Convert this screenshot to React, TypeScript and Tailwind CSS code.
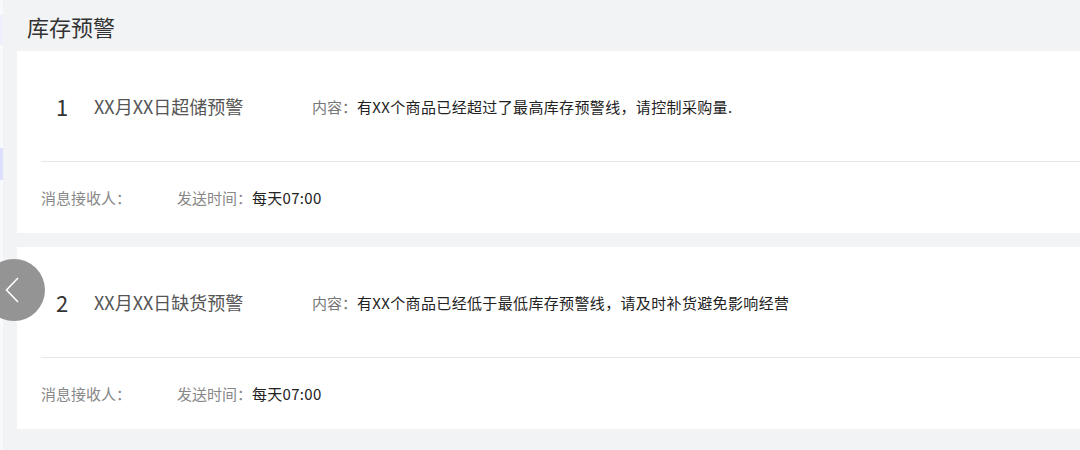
import React from "react";

const font = { fontFamily: '"Noto Sans CJK SC", "Noto Sans", sans-serif' };

type Item = { n: number; title: string; content: string };

const items: Item[] = [
  { n: 1, title: "XX月XX日超储预警", content: "有XX个商品已经超过了最高库存预警线，请控制采购量." },
  { n: 2, title: "XX月XX日缺货预警", content: "有XX个商品已经低于最低库存预警线，请及时补货避免影响经营" },
];

function Card({ item }: { item: Item }) {
  return (
    <div className="bg-white pl-[24px]">
      <div className="h-[111px] flex items-center border-b border-[#e8e8e8] pl-[15px]">
        <div className="w-[38px] text-[22px] text-[#333] leading-none">{item.n}</div>
        <div className="w-[218px] text-[18px] text-[#555] leading-none">{item.title}</div>
        <div className="text-[15px] leading-none">
          <span className="text-[#777]">内容：</span>
          <span className="text-[#222] tracking-[0.35px]">{item.content}</span>
        </div>
      </div>
      <div className="h-[71px] flex items-center text-[15px] leading-none">
        <div className="w-[136px] text-[#888]">消息接收人：</div>
        <div>
          <span className="text-[#888]">发送时间：</span>
          <span className="text-[#222] tracking-[0.3px]">每天07:00</span>
        </div>
      </div>
    </div>
  );
}

export default function App() {
  return (
    <div className="relative w-[1080px] h-[450px] overflow-hidden flex bg-[#f2f3f5]" style={font}>
      <div className="w-[3px] h-full bg-[#f8f9fc] flex flex-col">
        <div className="h-[15px]" />
        <div className="h-[30px] bg-[#eef0fb]" />
        <div className="h-[103px]" />
        <div className="h-[32px] bg-[#dcdfff]" />
      </div>
      <div className="flex-1 pl-[14px]">
        <div className="h-[51px] flex items-center pl-[10px] text-[22px] text-[#333] leading-none">库存预警</div>
        <div className="flex flex-col gap-[14px]">
          {items.map((it) => (
            <Card key={it.n} item={it} />
          ))}
        </div>
      </div>
      <div className="absolute left-[-17px] top-[259px] w-[62px] h-[62px] rounded-full bg-[#8e8e8e]/95 flex items-center justify-end pr-[26px]">
        <svg width="14" height="26" viewBox="0 0 14 26" fill="none">
          <path d="M13 1L1.5 13L13 25" stroke="white" strokeWidth="1.6" />
        </svg>
      </div>
    </div>
  );
}
